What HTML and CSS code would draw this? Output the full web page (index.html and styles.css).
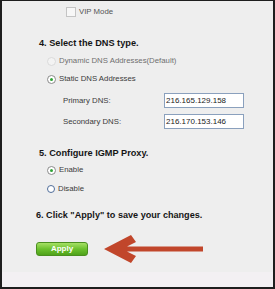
FILE: index.html
```html
<!DOCTYPE html>
<html lang="en">
<head>
    <meta charset="UTF-8">
    <meta name="viewport" content="width=device-width, initial-scale=1.0">
    <title>DNS Settings</title>
    <link rel="stylesheet" href="styles.css">
</head>
<body>
    <div class="frame">
        <div class="row vip">
            <span class="checkbox"></span>
            <span class="label muted">VIP Mode</span>
        </div>

        <div class="row heading h4">4. Select the DNS type.</div>
        <div class="row option first">
            <span class="radio disabled"></span>
            <span class="label faded">Dynamic DNS Addresses(Default)</span>
        </div>
        <div class="row option">
            <span class="radio checked"></span>
            <span class="label">Static DNS Addresses</span>
        </div>
        <div class="row field primary">
            <span class="field-label">Primary DNS:</span>
            <input class="ip" type="text" value="216.165.129.158">
        </div>
        <div class="row field secondary">
            <span class="field-label">Secondary DNS:</span>
            <input class="ip" type="text" value="216.170.153.146">
        </div>

        <div class="row heading h5">5. Configure IGMP Proxy.</div>
        <div class="row option enable">
            <span class="radio checked"></span>
            <span class="label">Enable</span>
        </div>
        <div class="row option disable">
            <span class="radio focus"></span>
            <span class="label">Disable</span>
        </div>

        <div class="row heading h6">6. Click "Apply" to save your changes.</div>
        <div class="row apply-row">
            <button type="button" class="apply">Apply</button>
            <svg class="arrow" width="100" height="28" viewBox="0 0 100 28">
                <polygon fill="#c1462b" points="0,14 27,0 32,7 23,11.5 99,11.5 99,16.5 23,16.5 32,21 27,28"/>
            </svg>
        </div>
    </div>
</body>
</html>
```

FILE: styles.css
```css
body, html {
    margin: 0;
    padding: 0;
}
.frame {
    width: 275px;
    height: 289px;
    box-sizing: border-box;
    border-style: solid;
    border-color: #1e1e1e;
    border-width: 1px 2px 2px 2px;
    background: linear-gradient(#eeeeee 271px, #f3f0f3 271px);
    padding-top: 4px;
    font-family: "Liberation Sans", Arial, sans-serif;
    color: #3a3a3a;
    font-size: 7.8px;
    display: flex;
    flex-direction: column;
}
.row {
    display: flex;
    align-items: center;
    height: 14px;
    line-height: 14px;
    white-space: nowrap;
}
.vip {
    padding-left: 64px;
}
.checkbox {
    width: 8px;
    height: 8px;
    border: 1px solid #c4c4c4;
    background: #f7f7f7;
    margin-right: 3px;
}
.muted {
    color: #555;
}
.faded {
    color: #6e6e6e;
}
.heading {
    font-weight: bold;
    font-size: 9.2px;
    color: #151515;
    padding-left: 37px;
}
.h4 {
    margin-top: 17px;
}
.h5 {
    margin-top: 17px;
}
.h6 {
    margin-top: 12px;
    padding-left: 34px;
    font-size: 9.1px;
}
.option {
    padding-left: 45px;
    margin-top: 4px;
}
.enable {
    margin-top: 3px;
}
.disable {
    margin-top: 5px;
}
.radio {
    width: 7px;
    height: 7px;
    border-radius: 50%;
    border: 1px solid #8a8a8a;
    background: #fff;
    margin-right: 3px;
    position: relative;
}
.radio.disabled {
    border-color: #dadada;
    background: #f3f3f3;
}
.radio.checked::after {
    content: "";
    position: absolute;
    left: 2px;
    top: 2px;
    width: 3px;
    height: 3px;
    border-radius: 50%;
    background: #2fa336;
}
.radio.focus {
    border: 1.5px solid #4f6d9a;
    width: 6px;
    height: 6px;
}
.field {
    height: 15px;
    padding-left: 61px;
}
.primary {
    margin-top: 7px;
}
.secondary {
    margin-top: 6px;
}
.field-label {
    width: 101px;
}
.ip {
    width: 80px;
    height: 15px;
    box-sizing: border-box;
    margin: 0;
    padding: 0 0 0 1px;
    border: 1px solid #8aa0bd;
    background: #fff;
    font-family: "Liberation Sans", Arial, sans-serif;
    font-size: 8px;
    color: #222;
    outline: none;
}
.apply-row {
    height: 28px;
    margin-top: 13px;
    padding-left: 34px;
}
.apply {
    width: 52px;
    height: 14px;
    margin: 0;
    padding: 0;
    border: 1px solid #4a8f1f;
    border-radius: 3px;
    background: linear-gradient(#a6e065, #6cc12e 50%, #4fa21a);
    color: #fff;
    font-family: "Liberation Sans", Arial, sans-serif;
    font-weight: bold;
    font-size: 8px;
    line-height: 12px;
}
.arrow {
    margin-left: 16px;
    display: block;
}
```
